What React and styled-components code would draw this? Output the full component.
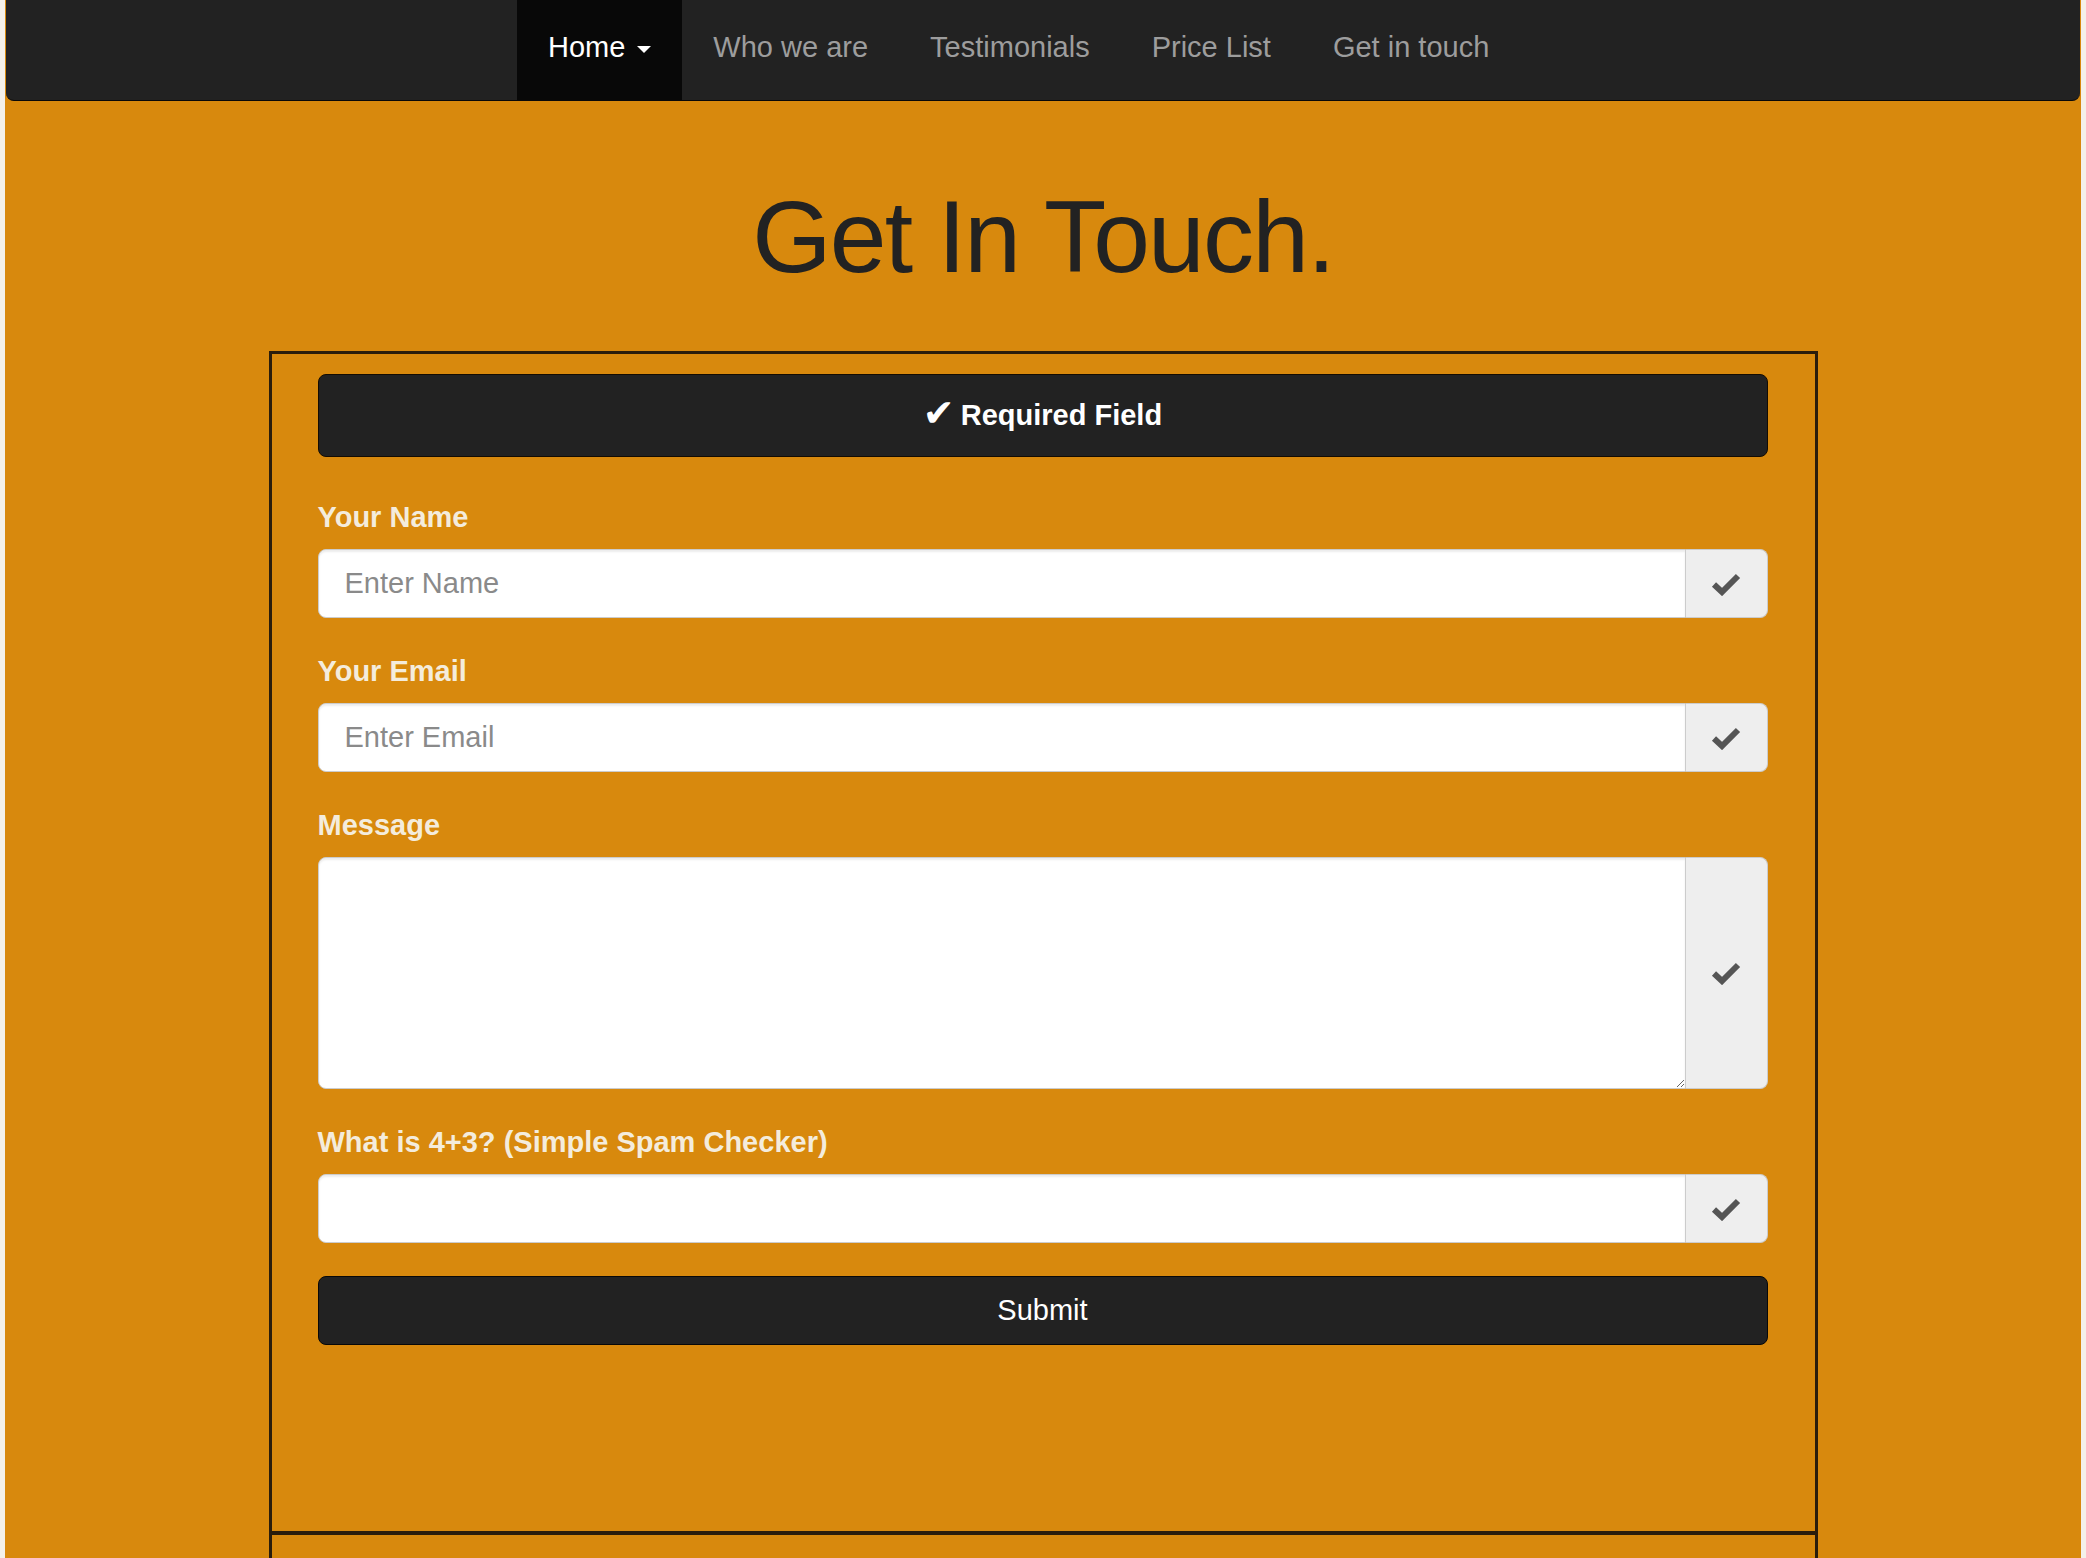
import styled, { createGlobalStyle } from "styled-components";

const GlobalStyle = createGlobalStyle`
  html {
    background: #f4f1ea;
  }
  body {
    margin: 0;
    overflow: hidden;
    font-family: "Liberation Sans", Arial, Helvetica, sans-serif;
  }
  * {
    box-sizing: border-box;
  }
`;

const StyledPage = styled.div`
  margin: 0 5px;
  height: 1558px;
  background: #d8890d;
  display: flex;
  flex-direction: column;
  align-items: center;
`;

const StyledNavbar = styled.nav`
  align-self: stretch;
  margin: 0 1px;
  height: 101px;
  background: #222222;
  border-bottom: 1px solid #080808;
  border-radius: 0 0 8px 8px;
  display: flex;
  padding-left: 511px;
`;

const StyledNavLink = styled.a`
  display: flex;
  align-items: flex-start;
  padding: 27px 31px 0;
  font-size: 29px;
  line-height: 40px;
  color: ${(p) => (p.$active ? "#ffffff" : "#9d9d9d")};
  background: ${(p) => (p.$active ? "#080808" : "transparent")};
  text-decoration: none;
  white-space: pre;
`;

const StyledCaret = styled.span`
  display: inline-block;
  margin: 19px 0 0 12px;
  width: 0;
  height: 0;
  border-top: 7px solid #ffffff;
  border-left: 7px solid transparent;
  border-right: 7px solid transparent;
`;

const StyledTitle = styled.h1`
  margin: 80px 0 58px;
  font-size: 102px;
  line-height: 1.1;
  font-weight: 400;
  color: #222222;
  letter-spacing: -1.8px;
`;

const StyledBox = styled.div`
  width: 1549px;
  border: 3px solid #2a1d0c;
  padding: 20px 47px 186px 46px;
`;

const StyledLowerBox = styled.div`
  width: 1549px;
  flex: 1;
  border: 3px solid #2a1d0c;
  border-top-width: 1px;
  border-bottom: 0;
`;

const StyledNotice = styled.div`
  height: 83px;
  margin-bottom: 40px;
  background: #222222;
  border: 1px solid #140c02;
  border-radius: 8px;
  display: flex;
  align-items: center;
  justify-content: center;
  gap: 6px;
  color: #ffffff;
  font-size: 29px;
  font-weight: 700;
`;

const StyledNoticeCheck = styled.span`
  font-family: "DejaVu Sans", sans-serif;
  font-size: 38px;
  line-height: 1;
  margin-top: -6px;
`;

const StyledGroup = styled.div`
  margin-bottom: 33px;
`;

const StyledLabel = styled.label`
  display: block;
  margin-bottom: 12px;
  font-size: 29px;
  line-height: 40px;
  font-weight: 700;
  color: #f4ecdc;
`;

const StyledInputGroup = styled.div`
  display: flex;
  height: ${(p) => p.$height}px;
`;

const StyledInput = styled.input`
  flex: 1;
  min-width: 0;
  height: 100%;
  padding: 0 26px;
  border: 1px solid #cccccc;
  border-radius: 8px 0 0 8px;
  box-shadow: inset 0 2px 2px rgba(0, 0, 0, 0.075);
  background: #ffffff;
  font-family: "Liberation Sans", Arial, sans-serif;
  font-size: 29px;
  color: #555555;
  outline: none;

  &::placeholder {
    color: #8a8a8a;
  }
`;

const StyledTextArea = styled.textarea`
  flex: 1;
  min-width: 0;
  height: 100%;
  padding: 12px 26px;
  border: 1px solid #cccccc;
  border-radius: 8px 0 0 8px;
  box-shadow: inset 0 2px 2px rgba(0, 0, 0, 0.075);
  background: #ffffff;
  font-family: "Liberation Sans", Arial, sans-serif;
  font-size: 29px;
  resize: vertical;
  outline: none;
`;

const StyledAddon = styled.span`
  flex: 0 0 82px;
  display: flex;
  align-items: center;
  justify-content: center;
  background: #eeeeee;
  border: 1px solid #cccccc;
  border-left: 0;
  border-radius: 0 8px 8px 0;
  color: #555555;
`;

const StyledSubmit = styled.button`
  display: block;
  width: 100%;
  height: 69px;
  background: #222222;
  border: 1px solid #080808;
  border-radius: 8px;
  color: #ffffff;
  font-family: "Liberation Sans", Arial, sans-serif;
  font-size: 29px;
  cursor: pointer;
`;

function CheckIcon() {
  return (
    <svg width="30" height="24" viewBox="0 0 30 24">
      <polyline
        points="3,12.5 11,20 27,4"
        fill="none"
        stroke="currentColor"
        strokeWidth="6"
        strokeLinejoin="miter"
      />
    </svg>
  );
}

function Field({ label, placeholder, height = 69, multiline }) {
  return (
    <StyledGroup>
      <StyledLabel>{label}</StyledLabel>
      <StyledInputGroup $height={height}>
        {multiline ? (
          <StyledTextArea />
        ) : (
          <StyledInput type="text" placeholder={placeholder} />
        )}
        <StyledAddon>
          <CheckIcon />
        </StyledAddon>
      </StyledInputGroup>
    </StyledGroup>
  );
}

const links = ["Who we are", "Testimonials", "Price List", "Get in touch"];

function App() {
  return (
    <>
      <GlobalStyle />
      <StyledPage>
        <StyledNavbar>
          <StyledNavLink $active href="#">
            Home
            <StyledCaret />
          </StyledNavLink>
          {links.map((link) => (
            <StyledNavLink key={link} href="#">
              {link}
            </StyledNavLink>
          ))}
        </StyledNavbar>

        <StyledTitle>Get In Touch.</StyledTitle>

        <StyledBox>
          <StyledNotice>
            <StyledNoticeCheck>✔</StyledNoticeCheck>
            Required Field
          </StyledNotice>
          <Field label="Your Name" placeholder="Enter Name" />
          <Field label="Your Email" placeholder="Enter Email" />
          <Field label="Message" height={232} multiline />
          <Field label="What is 4+3? (Simple Spam Checker)" />
          <StyledSubmit type="submit">Submit</StyledSubmit>
        </StyledBox>
        <StyledLowerBox />
      </StyledPage>
    </>
  );
}

export default App;
